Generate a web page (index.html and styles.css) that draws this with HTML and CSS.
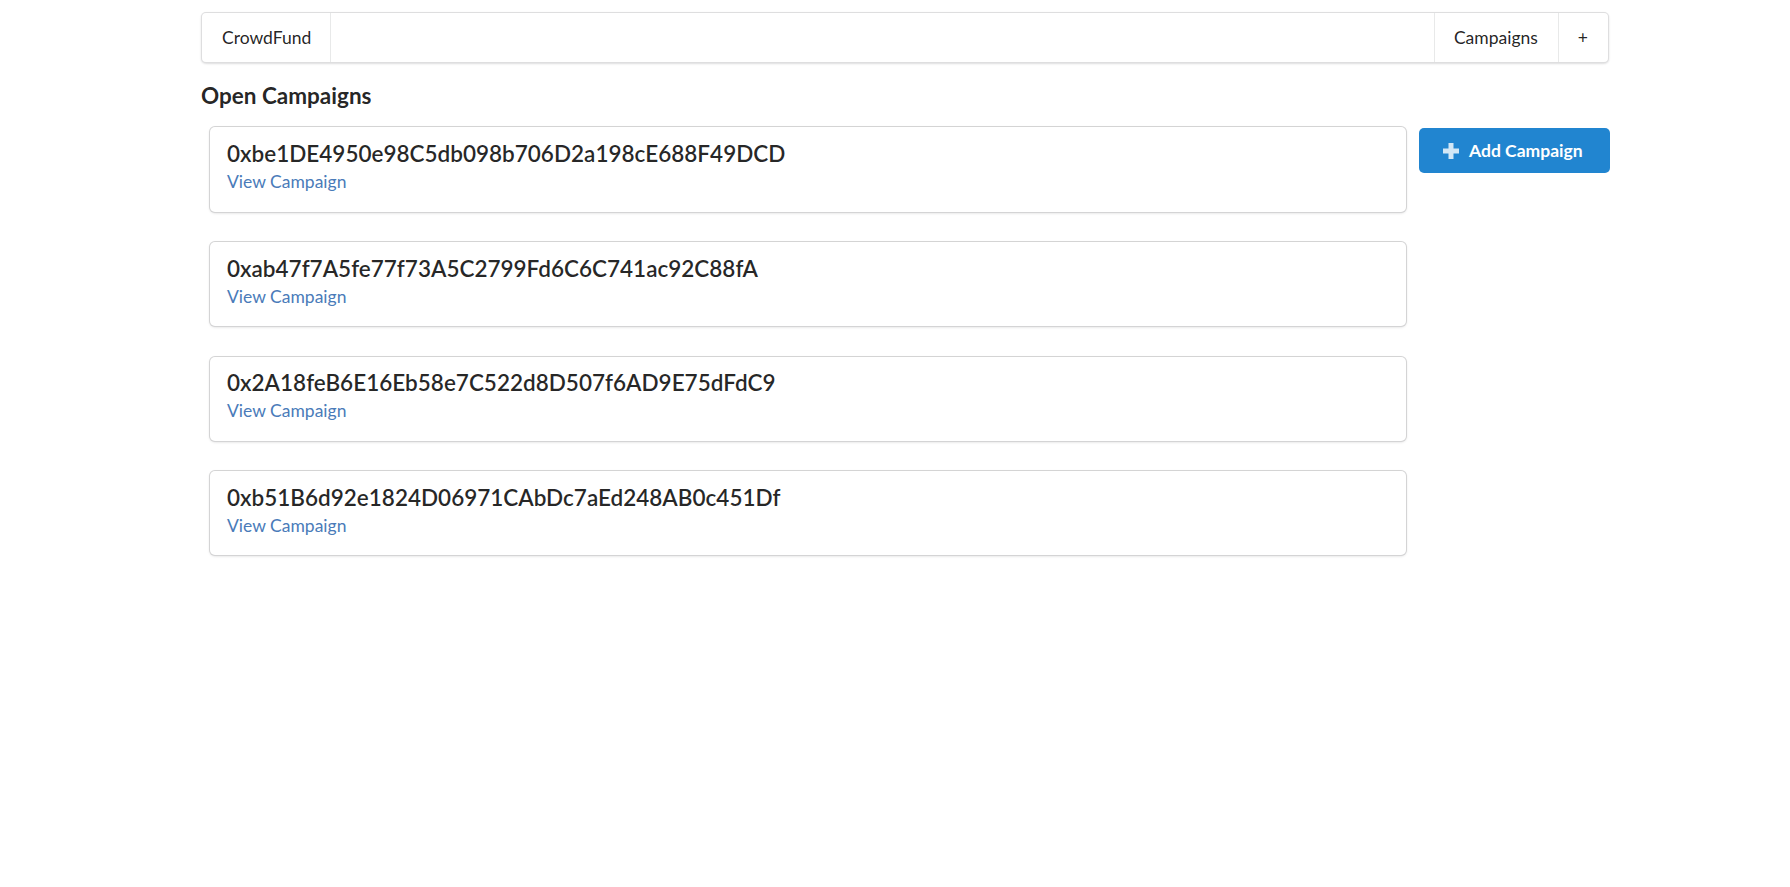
FILE: index.html
```html
<!DOCTYPE html>
<html>
<head>
<meta charset="utf-8">
<link rel="stylesheet" href="styles.css">
</head>
<body>
<div class="container">
  <nav class="menu">
    <a class="item brand">CrowdFund</a>
    <div class="right">
      <a class="item divided">Campaigns</a>
      <a class="item divided">+</a>
    </div>
  </nav>
  <h3 class="title">Open Campaigns</h3>
  <div class="grid">
    <div class="cards">
      <div class="card">
        <div class="header">0xbe1DE4950e98C5db098b706D2a198cE688F49DCD</div>
        <a class="link">View Campaign</a>
      </div>
      <div class="card">
        <div class="header">0xab47f7A5fe77f73A5C2799Fd6C6C741ac92C88fA</div>
        <a class="link">View Campaign</a>
      </div>
      <div class="card">
        <div class="header">0x2A18feB6E16Eb58e7C522d8D507f6AD9E75dFdC9</div>
        <a class="link">View Campaign</a>
      </div>
      <div class="card">
        <div class="header">0xb51B6d92e1824D06971CAbDc7aEd248AB0c451Df</div>
        <a class="link">View Campaign</a>
      </div>
    </div>
    <div class="side">
      <button class="button">
        <svg class="plus" width="16" height="16" viewBox="0 0 16 16"><path d="M5.5 0h5v5.5H16v5h-5.5V16h-5v-5.5H0v-5h5.5z" fill="currentColor"/></svg>
        Add Campaign
      </button>
    </div>
  </div>
</div>
</body>
</html>
```
FILE: styles.css
```css
html, body {
  margin: 0;
  padding: 0;
  background: #fff;
}
body {
  font-family: Lato, "Helvetica Neue", Arial, sans-serif;
  font-size: 17.5px;
  line-height: 1.4285em;
  color: rgba(0, 0, 0, 0.87);
}
.container {
  width: 1408px;
  margin-left: 201px;
  padding: 12px 0 40px;
}
.menu {
  display: flex;
  box-sizing: border-box;
  height: 51px;
  border: 1px solid rgba(34, 36, 38, 0.15);
  border-radius: 5px;
  box-shadow: 0 1px 2px 0 rgba(34, 36, 38, 0.15);
  background: #fff;
}
.item {
  display: flex;
  align-items: center;
  padding: 0 20px;
  color: rgba(0, 0, 0, 0.87);
  text-decoration: none;
}
.brand {
  padding-right: 19px;
  border-right: 1px solid rgba(34, 36, 38, 0.1);
}
.right {
  display: flex;
  margin-left: auto;
}
.divided {
  padding-left: 19px;
  border-left: 1px solid rgba(34, 36, 38, 0.1);
}
.title {
  margin: 18.5px 0 17px;
  font-size: 22.5px;
  line-height: 1.2857em;
  font-weight: 700;
  color: rgba(0, 0, 0, 0.87);
}
.grid {
  display: flex;
  align-items: flex-start;
}
.cards {
  display: flex;
  flex-direction: column;
  gap: 30.5px;
  width: 1196px;
  margin-left: 9px;
}
.card {
  display: flex;
  flex-direction: column;
  align-items: flex-start;
  padding: 17.5px 17.5px 17.5px 17px;
  border-radius: 5px;
  background: #fff;
  box-shadow: 0 1px 3px 0 #d4d4d5, 0 0 0 1px #d4d4d5;
}
.header {
  margin-top: -4.8px;
  font-size: 22.5px;
  line-height: 1.2857em;
  font-weight: 600;
  color: rgba(0, 0, 0, 0.85);
}
.link {
  color: #4a7bb9;
  text-decoration: none;
}
.side {
  margin-left: auto;
  margin-right: -1px;
  padding-top: 1px;
}
.button {
  display: flex;
  align-items: center;
  box-sizing: border-box;
  width: 191px;
  height: 45px;
  padding: 0 0 0 24px;
  border: none;
  border-radius: 5px;
  background: #2185d0;
  color: #fff;
  font-family: Lato, "Helvetica Neue", Arial, sans-serif;
  font-size: 17.5px;
  font-weight: 700;
  line-height: 1em;
}
.plus {
  color: rgba(255, 255, 255, 0.8);
  margin-right: 10px;
}
```
